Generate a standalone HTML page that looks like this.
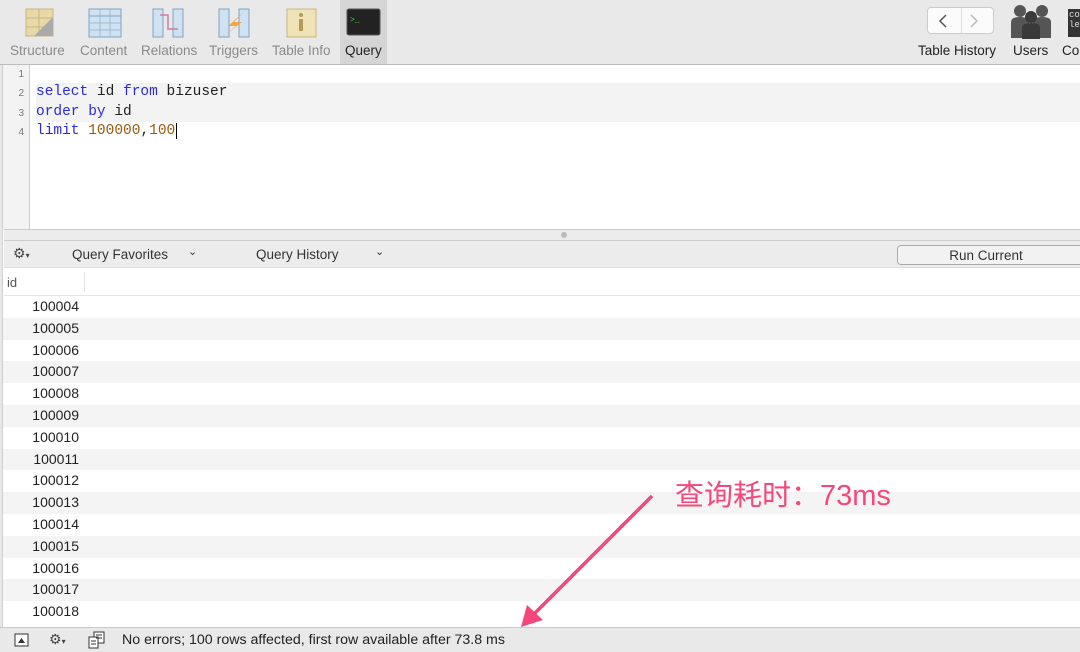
<!DOCTYPE html>
<html><head><meta charset="utf-8"><style>
*{margin:0;padding:0;box-sizing:border-box}
body{width:1080px;height:652px;overflow:hidden;background:#fff;font-family:"Liberation Sans",sans-serif;position:relative;font-size:13px;color:#222}
.abs{position:absolute}
.tb{top:0;left:0;width:1080px;height:65px;background:#e9e9e9;border-bottom:1px solid #bdbdbd}
.tl{position:absolute;top:43px;font-size:13.5px;color:#8a8a8a;text-align:center}
.code{font-family:"Liberation Mono",monospace;font-size:14.5px;position:absolute;left:36px}
.ln{position:absolute;left:0;width:24px;text-align:right;font-size:10px;color:#777}
.row{position:absolute;left:3px;width:1077px;height:22px}
.row span{position:absolute;left:0;width:76px;text-align:right;font-size:14px;top:2px}
</style></head><body>
<div class="abs tb"></div>
<div class="abs" style="left:340px;top:0;width:47px;height:64px;background:#d5d5d5"></div>
<svg class="abs" style="left:0;top:0" width="400" height="44">
<rect x="26" y="9" width="27" height="27" fill="#e8d9a8" stroke="#c9b57d"/>
<line x1="26" y1="18" x2="53" y2="18" stroke="#c9b57d"/><line x1="26" y1="27" x2="53" y2="27" stroke="#c9b57d"/><line x1="39" y1="9" x2="39" y2="36" stroke="#c9b57d"/>
<path d="M34 36 L53 17 L53 36Z" fill="#aaa"/>
<rect x="89" y="9" width="32" height="28" fill="#cfe2f2" stroke="#7fa3c4"/>
<line x1="89" y1="16" x2="121" y2="16" stroke="#7fa3c4"/><line x1="89" y1="23" x2="121" y2="23" stroke="#9fbad4"/><line x1="89" y1="30" x2="121" y2="30" stroke="#9fbad4"/><line x1="100" y1="9" x2="100" y2="37" stroke="#9fbad4"/><line x1="110" y1="9" x2="110" y2="37" stroke="#9fbad4"/>
<rect x="153" y="9" width="10" height="28" fill="#cfe2f2" stroke="#7fa3c4"/><rect x="173" y="9" width="10" height="28" fill="#cfe2f2" stroke="#7fa3c4"/>
<path d="M160 15 H168 V29 H178" stroke="#d07aa8" stroke-width="1.5" fill="none"/>
<rect x="219" y="9" width="10" height="28" fill="#cfe2f2" stroke="#7fa3c4"/><rect x="239" y="9" width="10" height="28" fill="#cfe2f2" stroke="#7fa3c4"/>
<path d="M244 12 L228 26 H236 L224 36 L242 22 H234Z" fill="#f2a44a"/>
<rect x="287" y="9" width="29" height="28" fill="#f0e3b8" stroke="#c9b57d"/>
<circle cx="301" cy="15" r="2" fill="#b49a5c"/><rect x="299" y="19" width="4" height="12" fill="#b49a5c"/>
<rect x="347" y="9" width="33" height="26" rx="2" fill="#222" stroke="#555"/>
<text x="350" y="22" fill="#4c4" font-size="8" font-family="Liberation Mono">&gt;_</text>
</svg>
<div class="tl" style="left:10px">Structure</div>
<div class="tl" style="left:80px">Content</div>
<div class="tl" style="left:141px">Relations</div>
<div class="tl" style="left:209px">Triggers</div>
<div class="tl" style="left:272px">Table Info</div>
<div class="tl" style="left:345px;color:#222">Query</div>
<div class="abs" style="left:927px;top:7px;width:67px;height:27px;background:#fbfbfb;border:1px solid #ccc;border-radius:4px"></div>
<div class="abs" style="left:961px;top:8px;width:1px;height:25px;background:#ddd"></div>
<svg class="abs" style="left:927px;top:7px" width="67" height="27"><path d="M19 8 L13 14 L19 20" stroke="#555" stroke-width="1.5" fill="none"/><path d="M44 8 L50 14 L44 20" stroke="#bbb" stroke-width="1.5" fill="none"/></svg>
<svg class="abs" style="left:1010px;top:2px" width="42" height="38"><circle cx="10" cy="9" r="6" fill="#555"/><circle cx="32" cy="9" r="6" fill="#555"/><path d="M1 36 V20 Q1 15 10 15 Q19 15 19 20 V36Z" fill="#555"/><path d="M23 36 V20 Q23 15 32 15 Q41 15 41 20 V36Z" fill="#555"/><circle cx="21" cy="15" r="6" fill="#3a3a3a"/><path d="M12 37 V26 Q12 21 21 21 Q30 21 30 26 V37Z" fill="#3a3a3a"/></svg>
<div class="abs" style="left:1068px;top:9px;width:12px;height:28px;background:#333"></div>
<div class="abs" style="left:1069px;top:10px;font-size:9px;color:#ddd;line-height:10px;font-family:'Liberation Mono'">co<br>le</div>
<div class="tl" style="left:918px;color:#222">Table History</div>
<div class="tl" style="left:1013px;color:#222">Users</div>
<div class="tl" style="left:1062px;color:#222">Co</div>
<div class="abs" style="left:0;top:65px;width:30px;height:165px;background:#f3f3f3;border-right:1px solid #ccc"></div>
<div class="abs" style="left:0;top:65px;width:3px;height:587px;background:#e8e8e8;border-right:1px solid #d0d0d0"></div>
<div class="abs" style="left:36px;top:83px;width:1044px;height:39px;background:#f3f3f3"></div>
<div class="ln" style="top:69px">1</div><div class="ln" style="top:88px">2</div><div class="ln" style="top:108px">3</div><div class="ln" style="top:127px">4</div>
<div class="code" style="top:84px"><span style="color:#2b2bdd">select</span> id <span style="color:#2b2bdd">from</span> bizuser</div>
<div class="code" style="top:104px"><span style="color:#2b2bdd">order by</span> id</div>
<div class="code" style="top:123px"><span style="color:#2b2bdd">limit</span> <span style="color:#9a5a10">100000</span>,<span style="color:#9a5a10">100</span><span style="border-left:1px solid #000;margin-left:1px"></span></div>
<div class="abs" style="left:4px;top:229px;width:1076px;height:12px;background:#ececec;border-top:1px solid #ccc;border-bottom:1px solid #ccc"></div>
<div class="abs" style="left:561px;top:232px;width:6px;height:6px;border-radius:3px;background:#bbb"></div>
<div class="abs" style="left:4px;top:241px;width:1076px;height:27px;background:#ececec;border-bottom:1px solid #ddd"></div>
<div class="abs" style="left:13px;top:245px;font-size:14px;color:#444">⚙<span style="font-size:8px">▾</span></div>
<div class="abs" style="left:72px;top:247px;color:#333;font-size:13.5px">Query Favorites</div>
<div class="abs" style="left:188px;top:245px;font-size:11px;color:#333">⌄</div>
<div class="abs" style="left:256px;top:247px;color:#333;font-size:13.5px">Query History</div>
<div class="abs" style="left:375px;top:245px;font-size:11px;color:#333">⌄</div>
<div class="abs" style="left:897px;top:245px;width:190px;height:20px;border:1px solid #aaa;border-radius:4px;background:#f2f2f2;text-align:center;font-size:13.5px;line-height:19px;color:#333;padding-right:12px">Run Current</div>
<div class="abs" style="left:4px;top:268px;width:1076px;height:28px;background:#fff;border-bottom:1px solid #e4e4e4"></div>
<div class="abs" style="left:84px;top:272px;width:1px;height:20px;background:#e4e4e4"></div>
<div class="abs" style="left:7px;top:275px;color:#555">id</div>
<div id="rows"></div>
<script>
var h='';for(var i=0;i<15;i++){var y=296+i*21.8;h+='<div class="row" style="top:'+y+'px;background:'+(i%2?'#f4f4f4':'#fff')+'"><span>'+(100004+i)+'</span></div>';}
document.getElementById('rows').innerHTML=h;
</script>
<div class="abs" style="left:0;top:627px;width:1080px;height:25px;background:#e9e9e9;border-top:1px solid #c8c8c8"></div>
<svg class="abs" style="left:14px;top:633px" width="16" height="14"><rect x="1" y="1" width="13" height="12" fill="#fff" stroke="#333"/><path d="M4 10 L7.5 5 L11 10Z" fill="#333"/></svg>
<div class="abs" style="left:49px;top:631px;font-size:14px;color:#444">⚙<span style="font-size:8px">▾</span></div>
<svg class="abs" style="left:88px;top:631px" width="18" height="18"><rect x="6" y="1" width="10" height="11" fill="#fff" stroke="#333"/><rect x="1" y="6" width="9" height="11" fill="#fff" stroke="#333"/><line x1="8" y1="4" x2="14" y2="4" stroke="#333"/><line x1="8" y1="7" x2="14" y2="7" stroke="#333"/><line x1="3" y1="10" x2="8" y2="10" stroke="#333"/><line x1="3" y1="13" x2="8" y2="13" stroke="#333"/></svg>
<div class="abs" style="left:122px;top:632px;color:#222;font-size:14.2px">No errors; 100 rows affected, first row available after 73.8 ms</div>
<div class="abs" style="left:675px;top:472px;font-size:29px;color:#f5487a;font-family:'Liberation Sans','Noto Sans CJK SC',sans-serif;white-space:nowrap">查询耗时：73ms</div>
<svg class="abs" style="left:0;top:0" width="1080" height="652"><line x1="652" y1="496" x2="534" y2="614" stroke="#f5487a" stroke-width="3.5"/><path d="M521 627 L527 605 L543 620Z" fill="#f5487a"/></svg>
</body></html>
